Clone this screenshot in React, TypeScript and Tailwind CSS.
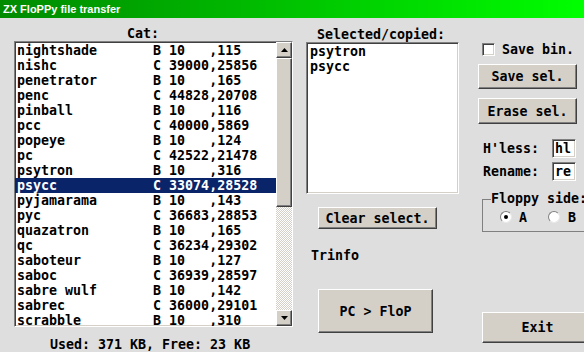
import React from 'react';

type Entry = { name: string; type: 'B' | 'C'; start: string; len: string };

const entries: Entry[] = [
  { name: 'nightshade', type: 'B', start: '10', len: '115' },
  { name: 'nishc', type: 'C', start: '39000', len: '25856' },
  { name: 'penetrator', type: 'B', start: '10', len: '165' },
  { name: 'penc', type: 'C', start: '44828', len: '20708' },
  { name: 'pinball', type: 'B', start: '10', len: '116' },
  { name: 'pcc', type: 'C', start: '40000', len: '5869' },
  { name: 'popeye', type: 'B', start: '10', len: '124' },
  { name: 'pc', type: 'C', start: '42522', len: '21478' },
  { name: 'psytron', type: 'B', start: '10', len: '316' },
  { name: 'psycc', type: 'C', start: '33074', len: '28528' },
  { name: 'pyjamarama', type: 'B', start: '10', len: '143' },
  { name: 'pyc', type: 'C', start: '36683', len: '28853' },
  { name: 'quazatron', type: 'B', start: '10', len: '165' },
  { name: 'qc', type: 'C', start: '36234', len: '29302' },
  { name: 'saboteur', type: 'B', start: '10', len: '127' },
  { name: 'saboc', type: 'C', start: '36939', len: '28597' },
  { name: 'sabre wulf', type: 'B', start: '10', len: '142' },
  { name: 'sabrec', type: 'C', start: '36000', len: '29101' },
  { name: 'scrabble', type: 'B', start: '10', len: '310' },
];

const selected = ['psytron', 'psycc'];

const sunken =
  'border border-t-[#808080] border-l-[#808080] border-r-white border-b-white shadow-[inset_1px_1px_0_#404040,inset_-1px_-1px_0_#d4d0c8]';
const raised =
  'bg-[#d4d0c8] border border-t-white border-l-white border-r-[#404040] border-b-[#404040] shadow-[inset_-1px_-1px_0_#808080]';

const Arrow = ({ up }: { up?: boolean }) => (
  <svg width="7" height="4" viewBox="0 0 7 4">
    <path d={up ? 'M3.5 0L7 4H0Z' : 'M0 0H7L3.5 4Z'} fill="#000" />
  </svg>
);

const Radio = ({ checked }: { checked?: boolean }) => (
  <div className="w-[12px] h-[12px] rounded-full bg-white border border-t-[#808080] border-l-[#808080] border-r-[#e8e8e8] border-b-[#e8e8e8] flex items-center justify-center shrink-0">
    {checked && <div className="w-[4px] h-[4px] rounded-full bg-black" />}
  </div>
);

export default function App() {
  return (
    <div className="w-[584px] h-[352px] overflow-hidden bg-[#dedede] font-['DejaVu_Sans_Mono',monospace] font-bold text-[13.3px] leading-[15px] text-black">
      {/* Title bar */}
      <div className="h-[18px] bg-gradient-to-r from-[#008a00] to-[#00ff00] pl-[3px] font-['Liberation_Sans',sans-serif] text-[11px] leading-[18px] text-white">
        ZX FloPPy file transfer
      </div>

      <div className="flex pl-[14px]">
        {/* Catalogue */}
        <div className="w-[279px] shrink-0">
          <div className="h-[23px] pt-[9px] pl-[113px] leading-[14px]">Cat:</div>
          <div className={`h-[286px] flex bg-white ${sunken}`}>
            <div className="flex-1 pt-[1px] overflow-hidden">
              {entries.map((e) => {
                const on = e.name === 'psycc';
                return (
                  <div
                    key={e.name}
                    className={`h-[15px] pl-[2px] whitespace-pre ${on ? 'bg-[#0a246a] text-white' : ''}`}
                  >
                    {`${e.name.padEnd(17)}${e.type} ${e.start.padEnd(5)},${e.len}`}
                  </div>
                );
              })}
            </div>
            <div className="w-[16px] flex flex-col shrink-0">
              <div className={`h-[16px] flex items-center justify-center ${raised}`}>
                <Arrow up />
              </div>
              <div className={`h-[149px] ${raised}`} />
              <div className="flex-1 bg-[repeating-conic-gradient(#ffffff_0_25%,#d4d0c8_0_50%)] bg-[length:2px_2px]" />
              <div className={`h-[16px] flex items-center justify-center ${raised}`}>
                <Arrow />
              </div>
            </div>
          </div>
          <div className="mt-[11px] pl-[36px] leading-[14px] whitespace-pre">Used: 371 KB, Free: 23 KB</div>
        </div>

        {/* Selected */}
        <div className="w-[153px] ml-[13px] shrink-0">
          <div className="h-[24px] pt-[10px] pl-[11px] leading-[14px]">Selected/copied:</div>
          <div className={`h-[152px] bg-white pt-[1px] pl-[3px] ${sunken}`}>
            {selected.map((s) => (
              <div key={s} className="h-[15px]">
                {s}
              </div>
            ))}
          </div>
          <button className={`mt-[13px] ml-[12px] w-[119px] h-[22px] flex items-center justify-center ${raised}`}>
            Clear select.
          </button>
          <div className="mt-[20px] pl-[5px] leading-[14px]">Trinfo</div>
          <button className={`mt-[26px] ml-[12px] w-[115px] h-[44px] flex items-center justify-center whitespace-pre ${raised}`}>
            PC &gt; FloP
          </button>
        </div>

        {/* Options */}
        <div className="w-[120px] ml-[19px] shrink-0">
          <div className="mt-[25px] flex items-center h-[13px]">
            <div className={`ml-[4px] w-[13px] h-[13px] bg-white ${sunken}`} />
            <span className="ml-[7px]">Save bin.</span>
          </div>
          <button className={`mt-[8px] w-[99px] h-[25px] flex items-center justify-center ${raised}`}>
            Save sel.
          </button>
          <button className={`mt-[9px] w-[99px] h-[26px] flex items-center justify-center ${raised}`}>
            Erase sel.
          </button>
          <div className="mt-[15px] flex items-center h-[19px]">
            <span className="ml-[5px] w-[69px]">H'less:</span>
            <div className={`w-[24px] h-[19px] bg-white pl-[2px] leading-[17px] ${sunken}`}>hl</div>
          </div>
          <div className="mt-[4px] flex items-center h-[19px]">
            <span className="ml-[5px] w-[69px]">Rename:</span>
            <div className={`w-[24px] h-[19px] bg-white pl-[2px] leading-[17px] ${sunken}`}>re</div>
          </div>
          <fieldset className="mt-[11px] ml-[4px] w-[120px] h-[40px] border border-[#808080]">
            <legend className="ml-[8px] leading-[14px] whitespace-pre">Floppy side:</legend>
            <div className="flex items-center h-[12px] mt-[5px] ml-[17px]">
              <Radio checked />
              <span className="ml-[7px]">A</span>
              <div className="ml-[21px]">
                <Radio />
              </div>
              <span className="ml-[8px]">B</span>
            </div>
          </fieldset>
          <button className={`mt-[80px] ml-[4px] w-[111px] h-[31px] flex items-center justify-center ${raised}`}>
            Exit
          </button>
        </div>
      </div>
    </div>
  );
}
